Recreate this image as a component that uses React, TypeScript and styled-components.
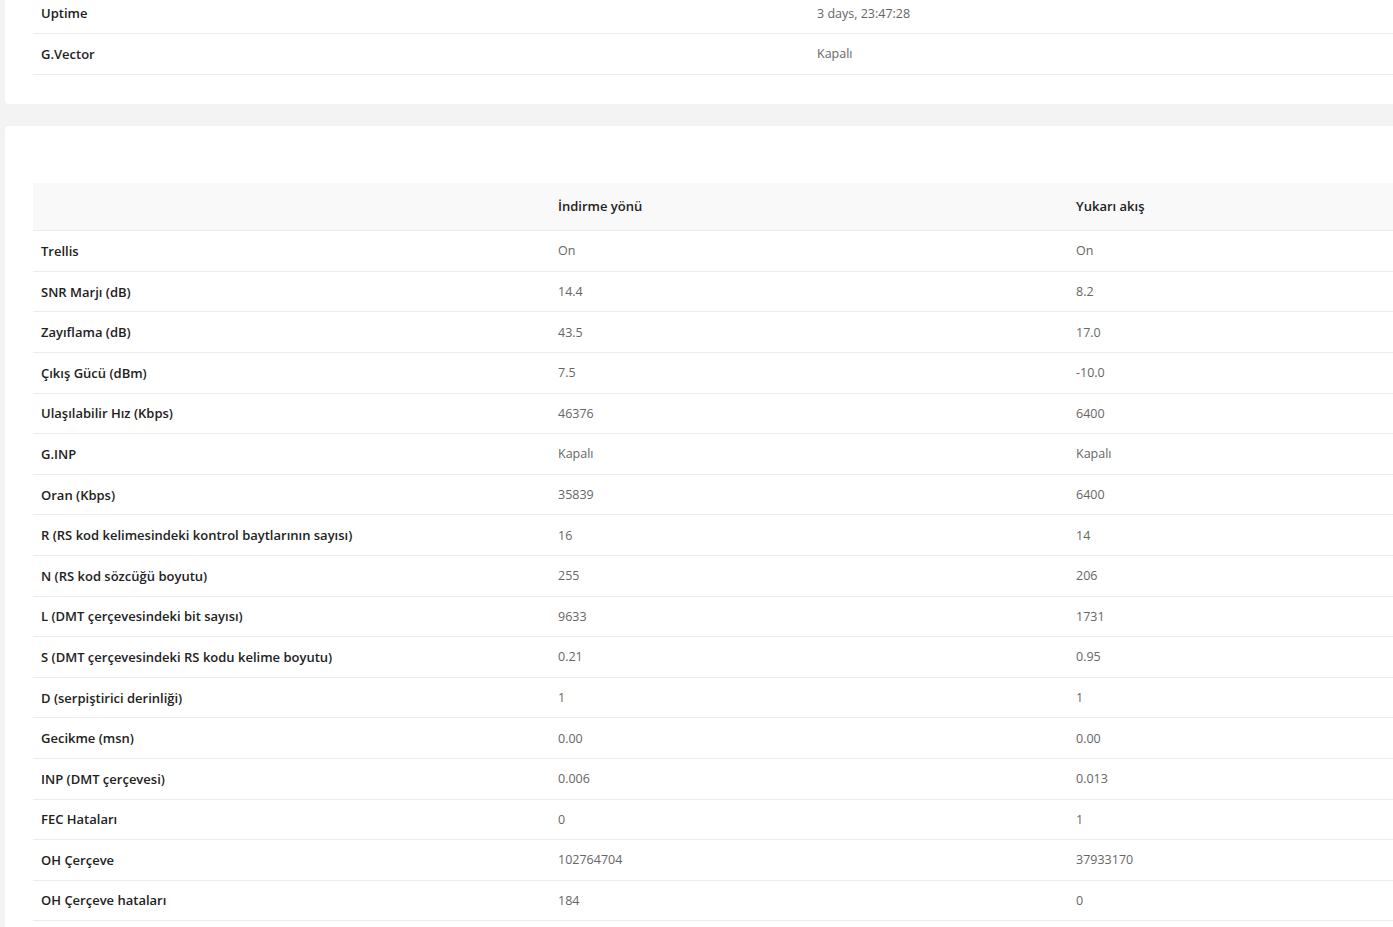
import styled, { createGlobalStyle } from "styled-components";

const Global = createGlobalStyle`
  body {
    margin: 0;
    background: #f3f3f3;
    font-family: "Open Sans", "Noto Sans", sans-serif;
    font-size: 12.5px;
  }
`;

const Page = styled.div`
  margin-top: -7px;
  padding-left: 5px;
  overflow: hidden;
`;

const Card = styled.div<{ $pad: string }>`
  background: #fff;
  border-radius: 4px;
  padding: ${(p) => p.$pad};
  margin-bottom: 22px;
  width: 1420px;
`;

const Table = styled.table`
  width: 1392px;
  border-collapse: collapse;
`;

const HeadRow = styled.tr`
  background: #f9f9f9;
  height: 48px;
`;

const Row = styled.tr`
  height: 40.6px;
  border-bottom: 1px solid #ececec;
`;

const Label = styled.td<{ $w?: string }>`
  padding: 0 8px;
  font-weight: 600;
  font-size: 13px;
  color: #222;
  width: ${(p) => p.$w || "auto"};
`;

const Value = styled.td<{ $w?: string }>`
  padding: 0 8px;
  color: #666;
  width: ${(p) => p.$w || "auto"};
`;

const Th = styled.th<{ $w?: string }>`
  padding: 0 8px;
  text-align: left;
  font-weight: 600;
  font-size: 13px;
  color: #222;
  border-bottom: 1px solid #ececec;
  width: ${(p) => p.$w || "auto"};
`;

const rows: [string, string, string][] = [
  ["Trellis", "On", "On"],
  ["SNR Marjı (dB)", "14.4", "8.2"],
  ["Zayıflama (dB)", "43.5", "17.0"],
  ["Çıkış Gücü (dBm)", "7.5", "-10.0"],
  ["Ulaşılabilir Hız (Kbps)", "46376", "6400"],
  ["G.INP", "Kapalı", "Kapalı"],
  ["Oran (Kbps)", "35839", "6400"],
  ["R (RS kod kelimesindeki kontrol baytlarının sayısı)", "16", "14"],
  ["N (RS kod sözcüğü boyutu)", "255", "206"],
  ["L (DMT çerçevesindeki bit sayısı)", "9633", "1731"],
  ["S (DMT çerçevesindeki RS kodu kelime boyutu)", "0.21", "0.95"],
  ["D (serpiştirici derinliği)", "1", "1"],
  ["Gecikme (msn)", "0.00", "0.00"],
  ["INP (DMT çerçevesi)", "0.006", "0.013"],
  ["FEC Hataları", "0", "1"],
  ["OH Çerçeve", "102764704", "37933170"],
  ["OH Çerçeve hataları", "184", "0"],
];

export default function App() {
  return (
    <Page>
      <Global />
      <Card $pad="0 0 29px 28px">
        <Table>
          <tbody>
            <Row>
              <Label $w="760px">Uptime</Label>
              <Value>3 days, 23:47:28</Value>
            </Row>
            <Row>
              <Label $w="760px">G.Vector</Label>
              <Value>Kapalı</Value>
            </Row>
          </tbody>
        </Table>
      </Card>
      <Card $pad="57px 0 10px 28px">
        <Table>
          <thead>
            <HeadRow>
              <Th $w="501px"></Th>
              <Th $w="502px">İndirme yönü</Th>
              <Th>Yukarı akış</Th>
            </HeadRow>
          </thead>
          <tbody>
            {rows.map(([a, b, c]) => (
              <Row key={a}>
                <Label>{a}</Label>
                <Value>{b}</Value>
                <Value>{c}</Value>
              </Row>
            ))}
          </tbody>
        </Table>
      </Card>
    </Page>
  );
}
